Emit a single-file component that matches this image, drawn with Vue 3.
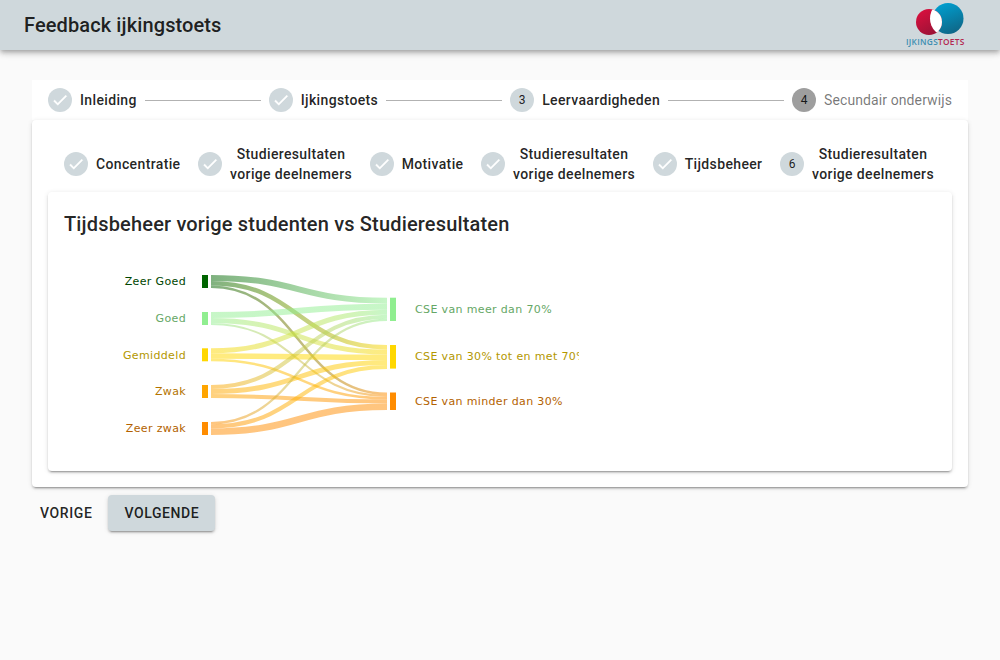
<script setup>
const mainSteps = [
  { label: "Inleiding", done: true },
  { label: "Ijkingstoets", done: true },
  { label: "Leervaardigheden", nr: 3 },
  { label: "Secundair onderwijs", nr: 4, active: true },
];

const subSteps = [
  { lines: ["Concentratie"], done: true },
  { lines: ["Studieresultaten", "vorige deelnemers"], done: true },
  { lines: ["Motivatie"], done: true },
  { lines: ["Studieresultaten", "vorige deelnemers"], done: true },
  { lines: ["Tijdsbeheer"], done: true },
  { lines: ["Studieresultaten", "vorige deelnemers"], nr: 6 },
];

const sources = [
  { name: "Zeer Goed", color: "#006400", text: "#004600", y: 275 },
  { name: "Goed", color: "#90ee90", text: "#65a765", y: 312 },
  { name: "Gemiddeld", color: "#ffd700", text: "#b39700", y: 348.3 },
  { name: "Zwak", color: "#ffa500", text: "#b37300", y: 385 },
  { name: "Zeer zwak", color: "#ff8c00", text: "#b36200", y: 422 },
];

const targets = [
  { name: "CSE van meer dan 70%", color: "#90ee90", text: "#65a765", y: 297.7, h: 23.3, labelY: 309.3 },
  { name: "CSE van 30% tot en met 70%", color: "#ffd700", text: "#b39700", y: 345, h: 23.6, labelY: 356 },
  { name: "CSE van minder dan 30%", color: "#ff8c00", text: "#b36200", y: 392.5, h: 17.5, labelY: 401.2 },
];

// widths of the bands, row = source, column = target
const flows = [
  [6, 4.5, 2.5],
  [6, 5, 2],
  [5, 5.5, 2.5],
  [4, 5, 4],
  [2.3, 4.1, 6.6],
];

const targetOffset = targets.map((t) => t.y);
const links = [];
flows.forEach((row, s) => {
  let y0 = sources[s].y;
  row.forEach((w, t) => {
    const a = y0 + w / 2;
    const b = targetOffset[t] + w / 2;
    links.push({
      id: `grad-${s}-${t}`,
      from: sources[s].color,
      to: targets[t].color,
      w,
      d: `M211,${a} C299,${a} 299,${b} 387,${b}`,
    });
    y0 += w;
    targetOffset[t] += w;
  });
});
</script>

<template>
  <div class="page">
    <header class="toolbar">
      <div class="toolbar-title">Feedback ijkingstoets</div>
      <svg class="logo" width="60" height="48" viewBox="0 0 60 48">
        <defs>
          <linearGradient id="logoRed" x1="0" y1="0" x2="0.6" y2="1">
            <stop offset="0" stop-color="#e0103f" />
            <stop offset="1" stop-color="#9c1236" />
          </linearGradient>
          <linearGradient id="logoBlue" x1="0.3" y1="0" x2="0.7" y2="1">
            <stop offset="0" stop-color="#009fd0" />
            <stop offset="1" stop-color="#0f6585" />
          </linearGradient>
          <clipPath id="logoClip"><circle cx="23" cy="21" r="13" /></clipPath>
        </defs>
        <circle cx="42" cy="17.5" r="15.5" fill="url(#logoBlue)" />
        <circle cx="23" cy="21" r="13" fill="url(#logoRed)" />
        <circle cx="42" cy="17.5" r="18" fill="#fff" clip-path="url(#logoClip)" />
        <text x="0" y="44" class="logo-text"><tspan fill="#3d8fb2">IJKINGS</tspan><tspan fill="#b3274f">TOETS</tspan></text>
      </svg>
    </header>

    <main class="content">
      <div class="stepper-main">
        <template v-for="(step, i) in mainSteps" :key="step.label">
          <div v-if="i > 0" class="divider"></div>
          <div class="step">
            <span class="step-icon" :class="{ 'step-icon-active': step.active }">
              <svg v-if="step.done" width="18" height="18" viewBox="0 0 24 24">
                <path d="M21 7 9 19l-5.5-5.5 1.41-1.41L9 16.17 19.59 5.59 21 7Z" fill="#fff" stroke="#fff" stroke-width="0.6" />
              </svg>
              <template v-else>{{ step.nr }}</template>
            </span>
            <span class="step-label" :class="{ 'step-label-active': step.active }">{{ step.label }}</span>
          </div>
        </template>
      </div>

      <section class="card">
        <div class="stepper-sub">
          <div v-for="(step, i) in subSteps" :key="i" class="step">
            <span class="step-icon">
              <svg v-if="step.done" width="18" height="18" viewBox="0 0 24 24">
                <path d="M21 7 9 19l-5.5-5.5 1.41-1.41L9 16.17 19.59 5.59 21 7Z" fill="#fff" stroke="#fff" stroke-width="0.6" />
              </svg>
              <template v-else>{{ step.nr }}</template>
            </span>
            <span class="step-label sub-label">
              <span v-for="line in step.lines" :key="line" class="sub-line">{{ line }}</span>
            </span>
          </div>
        </div>

        <div class="inner-card">
          <h2 class="chart-title">Tijdsbeheer vorige studenten vs Studieresultaten</h2>
          <svg class="sankey" width="515" height="199" viewBox="64 256 515 199">
            <defs>
              <linearGradient
                v-for="link in links"
                :id="link.id"
                :key="link.id"
                gradientUnits="userSpaceOnUse"
                x1="211"
                x2="387"
                y1="0"
                y2="0"
              >
                <stop offset="0" :stop-color="link.from" />
                <stop offset="1" :stop-color="link.to" />
              </linearGradient>
            </defs>
            <path
              v-for="link in links"
              :key="link.id"
              :d="link.d"
              :stroke="`url(#${link.id})`"
              :stroke-width="link.w"
              stroke-opacity="0.5"
              fill="none"
            />
            <g v-for="node in sources" :key="node.name">
              <rect x="202" :y="node.y" width="6" height="13" :fill="node.color" />
              <text x="186" :y="node.y + 6.5" dy="0.35em" text-anchor="end" class="node-text" :fill="node.text">{{ node.name }}</text>
            </g>
            <g v-for="node in targets" :key="node.name">
              <rect x="390" :y="node.y" width="6" :height="node.h" :fill="node.color" />
              <text x="415" :y="node.labelY" dy="0.35em" class="node-text" :fill="node.text">{{ node.name }}</text>
            </g>
          </svg>
        </div>
      </section>

      <div class="actions">
        <button class="btn btn-text">Vorige</button>
        <button class="btn btn-raised">Volgende</button>
      </div>
    </main>
  </div>
</template>

<style>
html,
body {
  margin: 0;
  background: #fafafa;
}
</style>

<style scoped>
.page {
  min-height: 660px;
  background: #fafafa;
  font-family: Roboto, "Liberation Sans", sans-serif;
  color: rgba(0, 0, 0, 0.87);
}

.toolbar {
  height: 50px;
  background: #cfd8dc;
  display: flex;
  align-items: center;
  justify-content: space-between;
  padding: 0 34px 0 24px;
  box-shadow: 0 2px 4px -1px rgba(0, 0, 0, 0.2), 0 4px 5px 0 rgba(0, 0, 0, 0.14), 0 1px 10px 0 rgba(0, 0, 0, 0.12);
}

.toolbar-title {
  font-size: 20px;
  font-weight: 500;
  letter-spacing: 0.11px;
}

.logo {
  display: block;
}

.logo-text {
  font-family: "Open Sans", sans-serif;
  font-size: 8.3px;
  font-weight: 600;
  letter-spacing: 0.3px;
}

.content {
  padding: 30px 32px 0;
}

/* Steppers */
.stepper-main {
  display: flex;
  align-items: center;
  height: 40px;
  padding: 0 8px;
  background: #fff;
}

.divider {
  flex: 1;
  border-top: 1px solid rgba(0, 0, 0, 0.3);
}

.step {
  display: flex;
  align-items: center;
  padding: 8px;
}

.step-icon {
  width: 24px;
  height: 24px;
  border-radius: 50%;
  background: #cfd8dc;
  display: flex;
  align-items: center;
  justify-content: center;
  margin-right: 8px;
  font-size: 12px;
  flex-shrink: 0;
}

.step-icon-active {
  background: #9e9e9e;
}

.step-label {
  font-size: 14px;
  font-weight: 500;
  line-height: 20px;
  letter-spacing: 0.36px;
}

.step-label-active {
  font-weight: 400;
  letter-spacing: 0.1px;
  color: rgba(0, 0, 0, 0.54);
}

.sub-label {
  display: flex;
  flex-direction: column;
  align-items: center;
}

.sub-line {
  white-space: nowrap;
}

.card {
  background: #fff;
  border-radius: 4px;
  padding: 16px;
  box-shadow: 0 3px 1px -2px rgba(0, 0, 0, 0.2), 0 2px 2px 0 rgba(0, 0, 0, 0.14), 0 1px 5px 0 rgba(0, 0, 0, 0.12);
}

.stepper-sub {
  display: flex;
  justify-content: space-between;
  align-items: center;
  height: 56px;
  padding: 0 10px 0 8px;
}

.inner-card {
  border-radius: 4px;
  height: 279px;
  box-sizing: border-box;
  padding: 16px;
  box-shadow: 0 3px 1px -2px rgba(0, 0, 0, 0.2), 0 2px 2px 0 rgba(0, 0, 0, 0.14), 0 1px 5px 0 rgba(0, 0, 0, 0.12);
}

.chart-title {
  margin: 0 0 16px;
  font-size: 20px;
  font-weight: 500;
  line-height: 32px;
  letter-spacing: 0.165px;
}

.sankey {
  display: block;
}

.node-text {
  font-family: "DejaVu Sans", sans-serif;
  font-size: 11px;
  letter-spacing: 0.36px;
}

.actions {
  display: flex;
  margin-top: 8px;
}

.btn {
  height: 36px;
  border: 0;
  border-radius: 4px;
  background: transparent;
  font-family: inherit;
  font-size: 14px;
  font-weight: 500;
  letter-spacing: 0.6px;
  text-transform: uppercase;
  color: rgba(0, 0, 0, 0.87);
  padding: 0 16px;
}

.btn-text {
  padding: 0 8px;
  margin-right: 8px;
}

.btn-raised {
  background: #cfd8dc;
  box-shadow: 0 3px 1px -2px rgba(0, 0, 0, 0.2), 0 2px 2px 0 rgba(0, 0, 0, 0.14), 0 1px 5px 0 rgba(0, 0, 0, 0.12);
}
</style>
